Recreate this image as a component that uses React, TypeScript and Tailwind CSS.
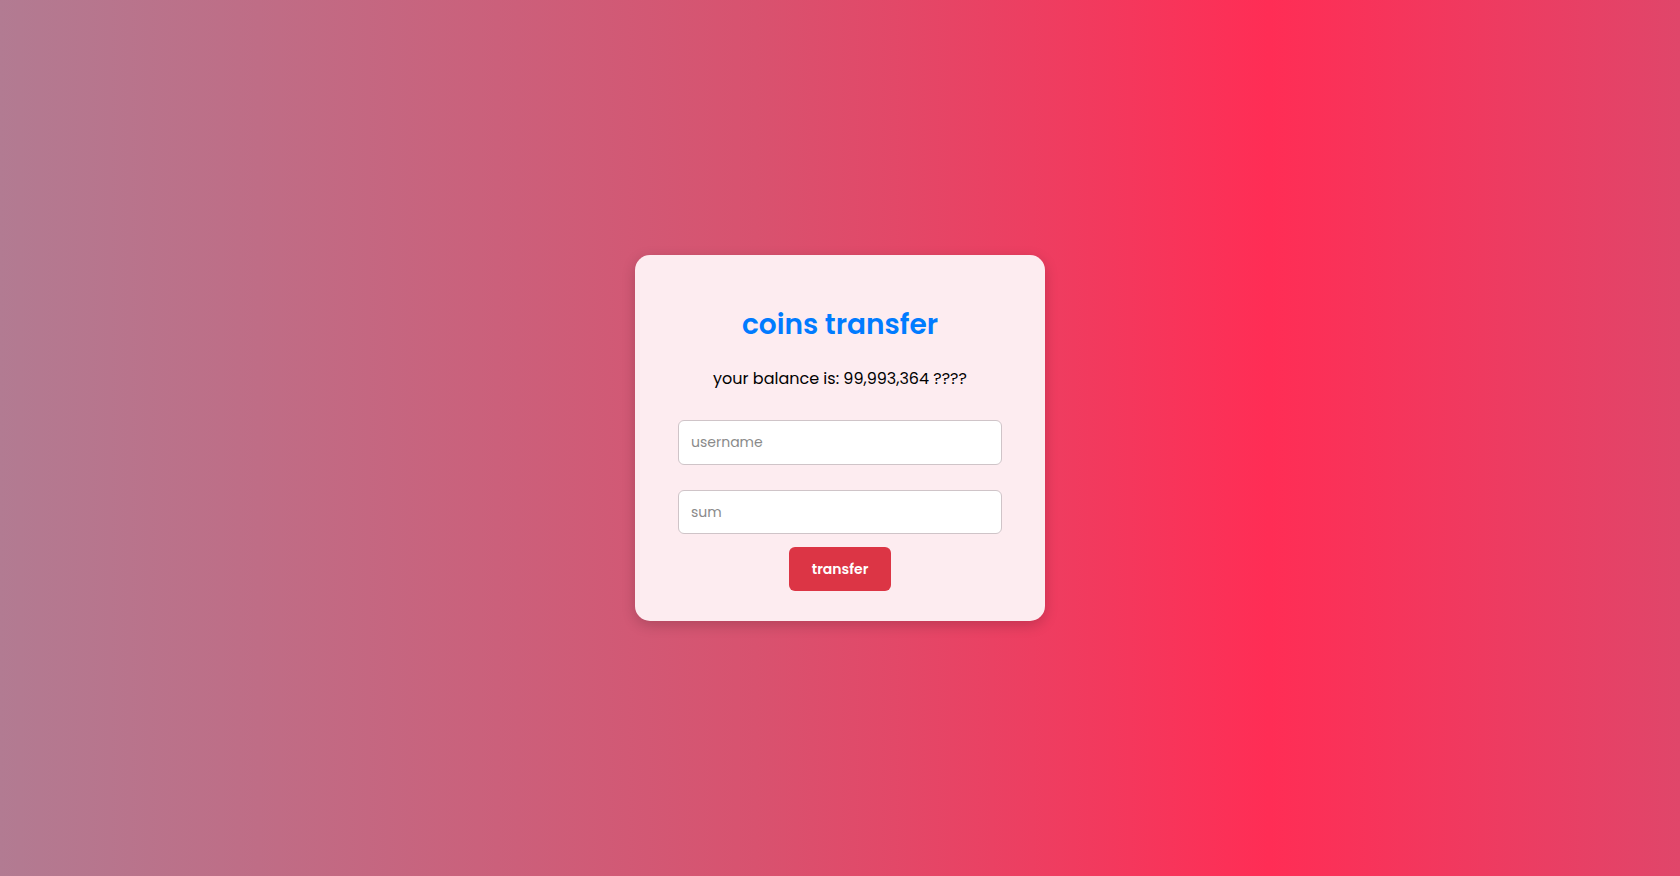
export default function App() {
  return (
    <div
      className="min-h-screen w-full flex items-center justify-center bg-[linear-gradient(to_right,#b27b92_0%,#d8526f_45%,#ff2d55_75.5%,#e0466a_100%)]"
      style={{ fontFamily: "Poppins, 'Open Sans', Lato, sans-serif" }}
    >
      <div className="w-[410px] h-[366px] rounded-[15px] bg-[#fdecf0] shadow-[0_4px_14px_rgba(0,0,0,0.18)] px-[43px] pt-[53px] pb-[30px] flex flex-col items-center">
        <h1 className="text-[28px] leading-[34px] font-semibold text-[#007bff]">coins transfer</h1>
        <p className="mt-[25px] text-[16px] leading-[24px] text-black">your balance is: 99,993,364 ????</p>
        <input
          className="mt-[29px] w-full h-[45px] rounded-[6px] border border-[#cfc4c8] bg-white px-[12px] text-[14px] text-black placeholder:text-[#8a8a8a] outline-none"
          placeholder="username"
        />
        <input
          className="mt-[25px] w-full h-[45px] rounded-[6px] border border-[#cfc4c8] bg-white px-[12px] text-[14px] text-black placeholder:text-[#8a8a8a] outline-none"
          placeholder="sum"
        />
        <button className="mt-[13px] w-[102px] h-[44px] rounded-[6px] bg-[#dc3545] text-white text-[14px] font-semibold">
          transfer
        </button>
      </div>
    </div>
  );
}
